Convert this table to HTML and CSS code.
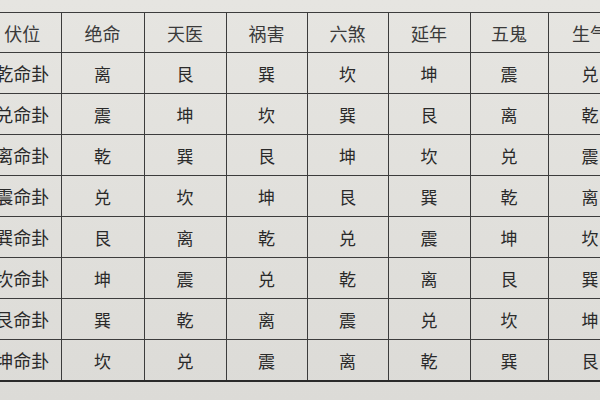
FILE: index.html
```html
<!DOCTYPE html>
<html lang="zh">
<head>
<meta charset="utf-8">
<link rel="stylesheet" href="styles.css">
</head>
<body>
<div class="page">
<table class="gua">
  <colgroup>
    <col class="c0"><col class="c1"><col class="c2"><col class="c3"><col class="c4"><col class="c5"><col class="c6"><col class="c7">
  </colgroup>
  <thead>
    <tr><th>伏位</th><th>绝命</th><th>天医</th><th>祸害</th><th>六煞</th><th>延年</th><th>五鬼</th><th>生气</th></tr>
  </thead>
  <tbody>
    <tr><th>乾命卦</th><td>离</td><td>艮</td><td>巽</td><td>坎</td><td>坤</td><td>震</td><td>兑</td></tr>
    <tr><th>兑命卦</th><td>震</td><td>坤</td><td>坎</td><td>巽</td><td>艮</td><td>离</td><td>乾</td></tr>
    <tr><th>离命卦</th><td>乾</td><td>巽</td><td>艮</td><td>坤</td><td>坎</td><td>兑</td><td>震</td></tr>
    <tr><th>震命卦</th><td>兑</td><td>坎</td><td>坤</td><td>艮</td><td>巽</td><td>乾</td><td>离</td></tr>
    <tr><th>巽命卦</th><td>艮</td><td>离</td><td>乾</td><td>兑</td><td>震</td><td>坤</td><td>坎</td></tr>
    <tr><th>坎命卦</th><td>坤</td><td>震</td><td>兑</td><td>乾</td><td>离</td><td>艮</td><td>巽</td></tr>
    <tr><th>艮命卦</th><td>巽</td><td>乾</td><td>离</td><td>震</td><td>兑</td><td>坎</td><td>坤</td></tr>
    <tr><th>坤命卦</th><td>坎</td><td>兑</td><td>震</td><td>离</td><td>乾</td><td>巽</td><td>艮</td></tr>
  </tbody>
</table>
</div>
</body>
</html>
```
FILE: styles.css
```css
html, body {
  margin: 0;
  padding: 0;
  width: 600px;
  height: 400px;
  overflow: hidden;
  background: #e2e1dd;
}
.page {
  width: 600px;
  height: 400px;
  overflow: hidden;
  padding-top: 12px;
  box-sizing: border-box;
  background: linear-gradient(180deg, #e6e5e1 0%, #e0dfdb 60%, #dcdbd7 100%);
}
.gua {
  margin-left: -16px;
  border-collapse: collapse;
  table-layout: fixed;
  width: 648px;
  font-family: "Noto Sans CJK SC", "Noto Sans CJK JP", sans-serif;
  color: #2e2e2e;
  border-top: 1.5px solid #4a4a4a;
  border-bottom: 2.5px solid #2a2a2a;
}
.c0 { width: 77px; }
.c1 { width: 83px; }
.c2 { width: 82px; }
.c3 { width: 81px; }
.c4 { width: 81px; }
.c5 { width: 82px; }
.c6 { width: 78px; }
.c7 { width: 84px; }
.gua th, .gua td {
  padding: 0;
  text-align: center;
  border: 1.5px solid #3c3c3c;
  font-weight: 400;
  white-space: nowrap;
}
.gua tr > :first-child { border-left: none; }
.gua thead th {
  height: 39px;
  font-size: 18px;
  color: #3a3a3a;
}
.gua tbody th {
  height: 40px;
  font-size: 18px;
  color: #2a2a2a;
}
.gua tbody td {
  height: 40px;
  font-size: 17px;
  color: #2a2a2a;
}
```
